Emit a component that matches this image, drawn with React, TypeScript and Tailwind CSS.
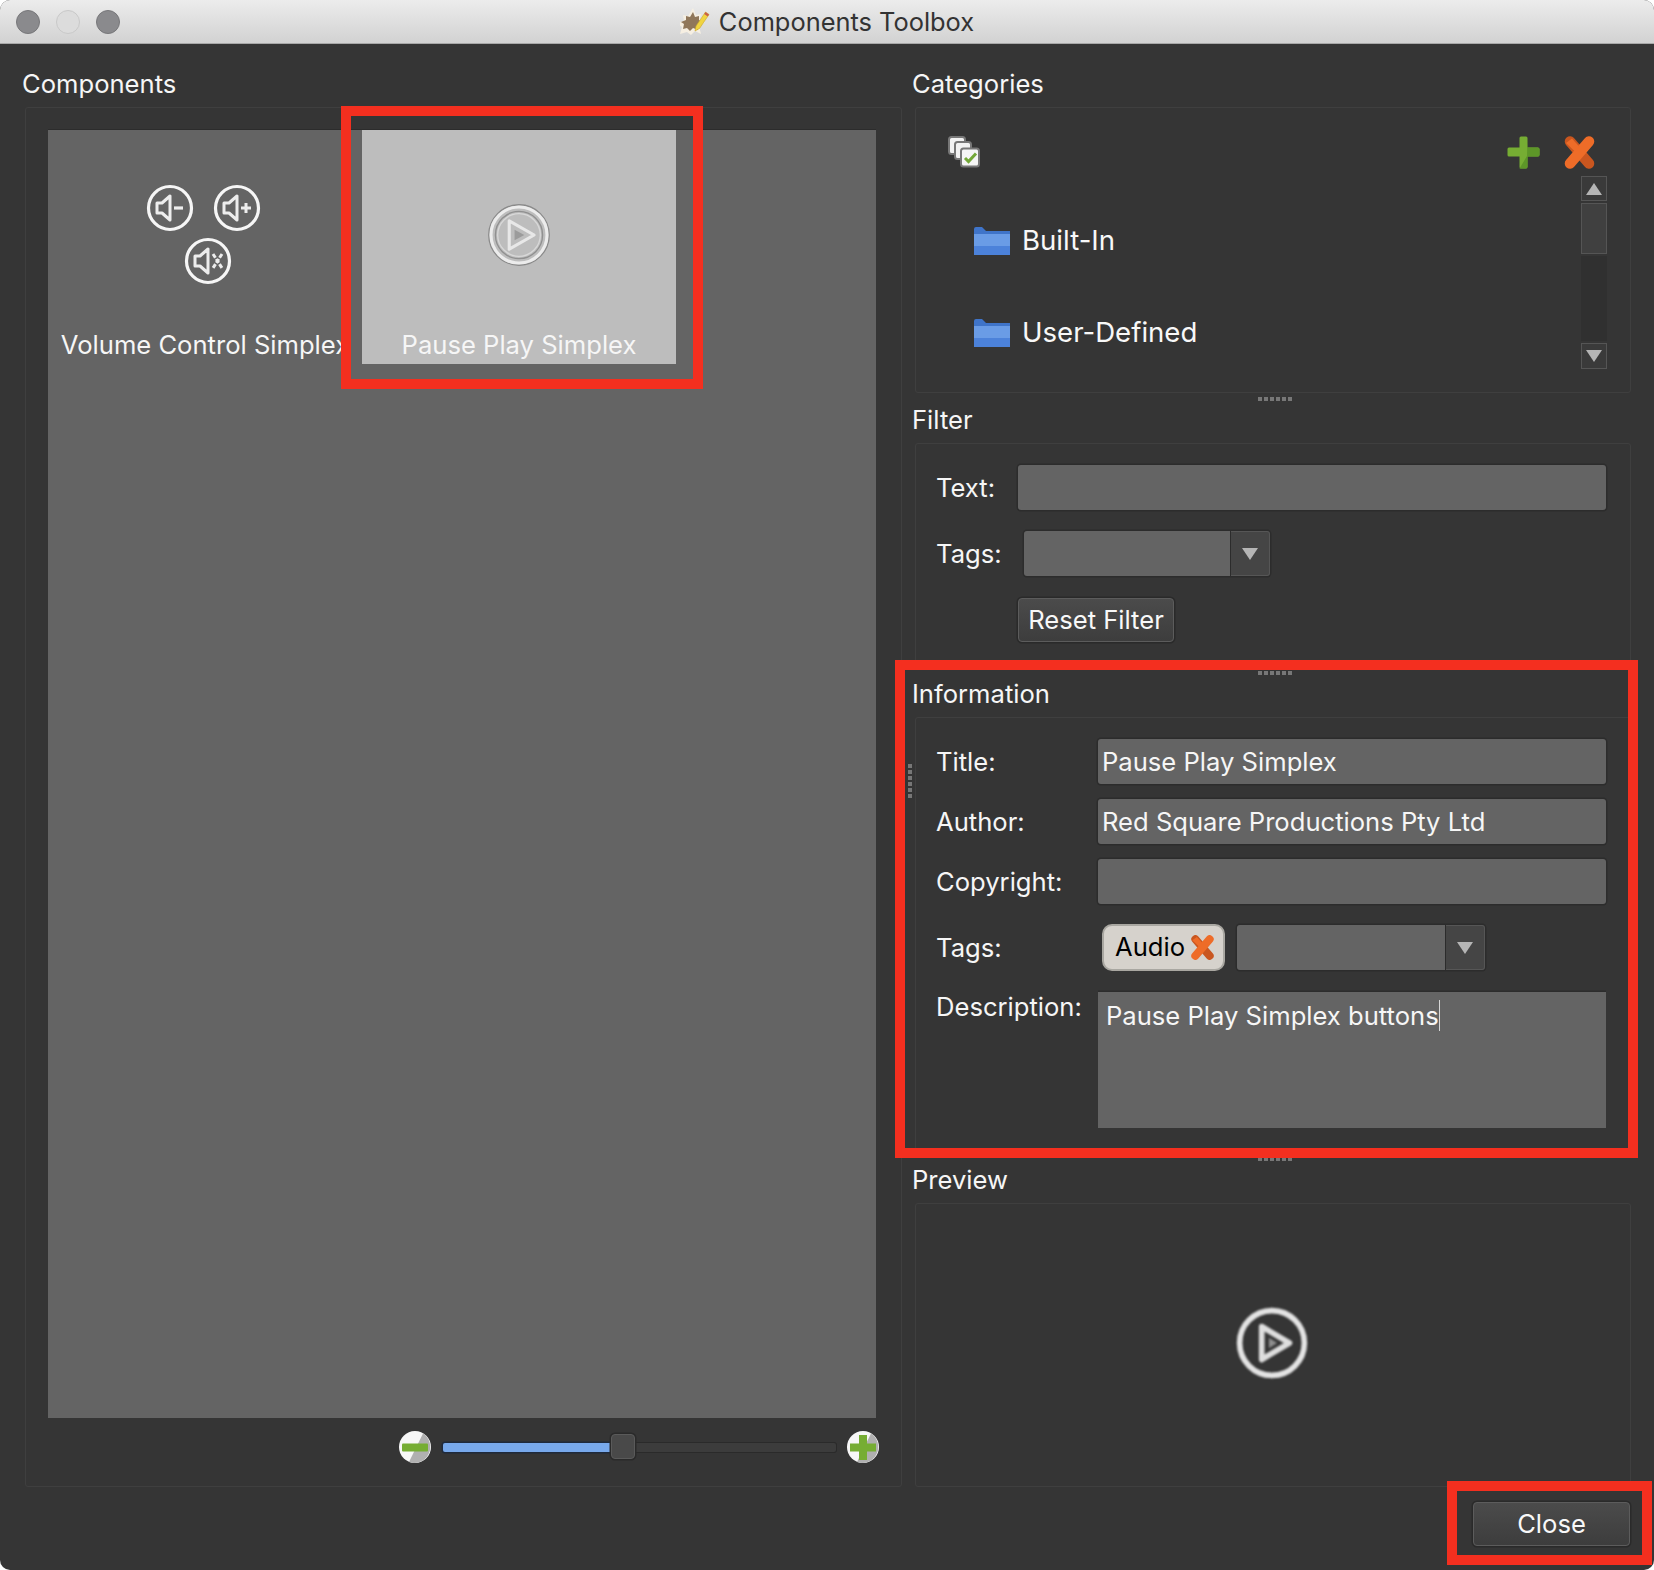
import React from "react";

const font = "font-['Inter','Liberation_Sans',sans-serif]";

function Plus({ className = "" }: { className?: string }) {
  return (
    <svg viewBox="0 0 33 33" className={className}>
      <path d="M12.5 2a1.5 1.5 0 0 1 1.5-1.5h5A1.5 1.5 0 0 1 20.5 2v9.5H31a1.5 1.5 0 0 1 1.5 1.5v6a1.5 1.5 0 0 1-1.5 1.5H20.5V31a1.5 1.5 0 0 1-1.5 1.5h-5a1.5 1.5 0 0 1-1.5-1.5V20.5H2A1.5 1.5 0 0 1 .5 19v-6A1.5 1.5 0 0 1 2 11.5h10.5z" fill="#76ad33" />
      <path d="M20.5 .8V11.5H31l1.5 1.5v6L31 20.5H20.5V31L19 32.5h-6.5L20 20z" fill="#5d9628" />
    </svg>
  );
}

function Cross({ className = "" }: { className?: string }) {
  return (
    <svg viewBox="0 0 33 33" className={className}>
      <path d="M7 5.500L26 27.500" stroke="#c9561f" strokeWidth="10.500" strokeLinecap="round" fill="none" />
      <path d="M26 5.500L7 27.500" stroke="#ee6c28" strokeWidth="10.500" strokeLinecap="round" fill="none" />
      <path d="M9 2.500L16.500 11 12.500 16 3 7z" fill="#ee6c28" />
    </svg>
  );
}

function Folder() {
  return (
    <svg viewBox="0 0 36 28" className="w-[36px] h-[28px] shrink-0">
      <path d="M0 2a2 2 0 0 1 2-2h6l4 4h24v8H0z" fill="#3f74c9" />
      <path d="M0 7h36v21H0z" fill="#6a9ce6" />
      <path d="M0 19h36v9H0z" fill="#4c82da" />
    </svg>
  );
}

function Arrow({ down = false }: { down?: boolean }) {
  return (
    <svg viewBox="0 0 16 12" className="w-[16px] h-[12px]">
      <path d={down ? "M0 0h16L8 12z" : "M0 12h16L8 0z"} fill="#b5b5b5" />
    </svg>
  );
}

function CircleIcon({ kind }: { kind: "minus" | "plus" | "mute" }) {
  return (
    <svg viewBox="0 0 48 48" className="w-[48px] h-[48px] blur-[0.5px]">
      <circle cx="24" cy="24" r="21.500" fill="none" stroke="#f6f6f6" strokeWidth="3.200" />
      <path d="M11 19h5l8-7v24l-8-7h-5z" fill="none" stroke="#ededed" strokeWidth="3" strokeLinejoin="round" />
      {kind === "minus" && <path d="M28 24h9" stroke="#ededed" strokeWidth="3.200" />}
      {kind === "plus" && <path d="M28 24h10M33 19v10" stroke="#ededed" strokeWidth="3" />}
      {kind === "mute" && <path d="M29 17l9 14M38 17l-9 14" stroke="#ededed" strokeWidth="3" strokeDasharray="4.500 1.500" />}
    </svg>
  );
}

function PlayIcon({ size, faded = false }: { size: string; faded?: boolean }) {
  return (
    <svg viewBox="0 0 72 72" className={`${size} ${faded ? "blur-[0.6px]" : "blur-[1px]"}`}>
      {faded ? (
        <>
          <circle cx="36" cy="36" r="34" fill="none" stroke="#8a8a8a" strokeWidth="1.500" />
          <circle cx="36" cy="36" r="31.500" fill="none" stroke="#ececec" strokeWidth="3.500" />
          <circle cx="36" cy="36" r="26.500" fill="none" stroke="#909090" strokeWidth="1.500" />
          <circle cx="36" cy="36" r="24" fill="none" stroke="#d8d8d8" strokeWidth="1.500" />
          <path d="M25 20l28 16-28 16z" fill="none" stroke="#e8e8e8" strokeWidth="3.500" strokeLinejoin="round" />
          <path d="M31 30l11 6-11 6z" fill="#9b9b9b" />
        </>
      ) : (
        <>
          <circle cx="36" cy="36" r="31.500" fill="none" stroke="#e4e4e4" strokeWidth="5.500" />
          <path d="M26 20l27 16-27 16z" fill="none" stroke="#dedede" strokeWidth="5.500" strokeLinejoin="round" />
          <path d="M33 31l8 5-8 5z" fill="#8f8f8f" />
        </>
      )}
    </svg>
  );
}

function StackChecks() {
  return (
    <svg viewBox="0 0 32 32" className="w-[32px] h-[32px] blur-[0.3px]">
      <rect x="1" y="1" width="16" height="17" rx="2.500" fill="#f2f2f2" stroke="#777" strokeWidth="2" />
      <rect x="7" y="6" width="16" height="17" rx="2.500" fill="#f2f2f2" stroke="#777" strokeWidth="2" />
      <rect x="13" y="12.500" width="18" height="18" rx="2.500" fill="#f5f5f5" stroke="#777" strokeWidth="2" />
      <path d="M17 22l3.500 3.500L28 17.500" fill="none" stroke="#73a838" strokeWidth="3" />
    </svg>
  );
}

function TitleIcon() {
  return (
    <svg viewBox="0 0 30 27" className="w-[30px] h-[27px] shrink-0 blur-[0.3px]">
      <path d="M13 0l3 7 5-1-1 5 5 3-6 4 2 8-6-3-4 4-4-3-7 2 2-7-5-4 7-2-1-6 5 1z" fill="#f6efe2" />
      <path d="M13 4l2 5 4-1v4l3 2-5 3 1 5-5-2-3 3-3-3-4 1 1-5-3-2 5-2V8l4 1z" fill="#90775a" />
      <path d="M25.500 4l3.500 2.500-9.500 14-4.500 2.500 1-5z" fill="#f0d441" stroke="#c8a52c" strokeWidth=".6" />
      <path d="M25.500 4l3.500 2.500-1.300 2-3.500-2.500z" fill="#c9604a" />
    </svg>
  );
}

function Grip({ vertical = false }: { vertical?: boolean }) {
  const dots = Array.from({ length: 6 });
  return (
    <div className={vertical ? "flex flex-col gap-[2px]" : "flex gap-[2px]"}>
      {dots.map((_, i) => (
        <span key={i} className="w-[4px] h-[4px] bg-[#777777]" />
      ))}
    </div>
  );
}

function Splitter() {
  return (
    <div className="h-[12px] flex items-center justify-center pl-[7px] pb-[1px]">
      <Grip />
    </div>
  );
}

function Heading({ children }: { children: React.ReactNode }) {
  return <div className="h-[30px] leading-[30px] mb-[8px] text-[25.6px] text-[#f6f6f6]">{children}</div>;
}

function Panel({ className = "", children }: { className?: string; children?: React.ReactNode }) {
  return <div className={`ml-[3px] border border-[#3f3f3f] rounded-[3px] ${className}`}>{children}</div>;
}

function Field({ children, className = "" }: { children?: React.ReactNode; className?: string }) {
  return (
    <div className={`h-[45px] bg-[#646464] rounded-[3px] shadow-[0_0_0_1.5px_#2c2c2c] pl-[4px] flex items-center text-[25.6px] leading-none text-[#f6f6f6] whitespace-nowrap ${className}`}>
      {children}
    </div>
  );
}

function Combo({ className = "" }: { className?: string }) {
  return (
    <div className={`h-[45px] flex rounded-[3px] shadow-[0_0_0_1.5px_#2c2c2c] ${className}`}>
      <div className="flex-1 bg-[#646464] rounded-l-[3px] border-r border-[#2c2c2c]" />
      <div className="w-[39px] bg-[#454545] rounded-r-[3px] border border-l-0 border-[#565656] flex items-center justify-center">
        <Arrow down />
      </div>
    </div>
  );
}

function Label({ children, width }: { children: React.ReactNode; width: string }) {
  return <div className={`${width} shrink-0 text-[25.6px] leading-[30px] text-[#f6f6f6]`}>{children}</div>;
}

function ActionButton({ children, className = "" }: { children: React.ReactNode; className?: string }) {
  return (
    <div className={`h-[44px] flex items-center justify-center rounded-[4px] border border-[#5c5c5c] bg-gradient-to-b from-[#4b4b4b] to-[#3d3d3d] shadow-[0_0_0_1.500px_#2a2a2a] text-[25.6px] text-[#f8f8f8] ${className}`}>
      {children}
    </div>
  );
}

function Tile({ selected = false, label, children }: { selected?: boolean; label: string; children: React.ReactNode }) {
  return (
    <div className={`relative w-[314px] h-[234px] shrink-0 overflow-hidden flex flex-col items-center ${selected ? "bg-[#bdbdbd]" : ""}`}>
      <div className="h-[200px] flex items-center justify-center">{children}</div>
      <div className="h-[30px] leading-[30px] text-[25.6px] text-[#f6f6f6] whitespace-nowrap">{label}</div>
    </div>
  );
}

function Slider() {
  return (
    <div className="h-[60px] flex items-center justify-end pb-[2px]">
      <svg viewBox="0 0 32 32" className="w-[32px] h-[32px] shrink-0">
        <circle cx="16" cy="16" r="16" fill="#f7f7f7" />
        <path d="M24 2.500A16 16 0 0 1 10 31z" fill="#b0b0b0" />
        <rect x="3" y="12.500" width="26" height="8" rx="1" fill="#76ad33" />
      </svg>
      <div className="relative ml-[12px] w-[393px] h-[9px] rounded-[2px] bg-[#3c3c3c] shadow-[0_0_0_1px_#2a2a2a]">
        <div className="h-full w-[168px] rounded-l-[2px] bg-[#78a9ec] shadow-[0_0_0_1.500px_#1f2a3c]" />
        <div className="absolute left-[168px] top-[-9px] w-[24px] h-[25px] rounded-[4px] bg-[#494949] border border-[#5a5a5a] shadow-[0_0_0_1.500px_#2a2a2a]" />
      </div>
      <svg viewBox="0 0 32 32" className="ml-[11px] w-[32px] h-[32px] shrink-0">
        <circle cx="16" cy="16" r="16" fill="#f7f7f7" />
        <path d="M24 2.500A16 16 0 0 1 10 31z" fill="#b0b0b0" />
        <path d="M12 4h8v8.500h9v8h-9V29h-8v-8.500H3v-8h9z" fill="#76ad33" />
      </svg>
    </div>
  );
}

export default function App() {
  return (
    <div className={`relative w-[1654px] h-[1570px] bg-white overflow-hidden ${font}`}>
      <div className="h-full flex flex-col bg-[#353535] rounded-[10px] overflow-hidden">
        {/* title bar */}
        <div className="relative h-[44px] shrink-0 flex items-center justify-center gap-[9px] bg-gradient-to-b from-[#ececec] to-[#d2d2d2] border-b border-[#a8a8a8]">
          <div className="absolute left-[16px] top-[10px] flex gap-[16px]">
            <span className="w-[24px] h-[24px] rounded-full bg-[#8a8a8d] border border-[#77777a]" />
            <span className="w-[24px] h-[24px] rounded-full bg-[#dcdcdc] border border-[#c8c8c8]" />
            <span className="w-[24px] h-[24px] rounded-full bg-[#8a8a8d] border border-[#77777a]" />
          </div>
          <TitleIcon />
          <span className="text-[25.4px] leading-none text-[#333333]">Components Toolbox</span>
        </div>

        {/* body */}
        <div className="flex gap-[10px] pl-[22px] pt-[25px]">
          {/* left */}
          <div className="w-[880px] shrink-0">
            <Heading>Components</Heading>
            <Panel className="h-[1380px] flex flex-col px-[22px] pt-[22px] pb-[8px]">
              <div className="flex-1 mr-[3px] bg-[#646464] shadow-[0_-1px_0_#2c2c2c] flex items-start">
                <Tile label="Volume Control Simplex">
                  <div className="w-[120px] mr-[4px] flex flex-wrap justify-center gap-x-[19px] gap-y-[5px] pt-[8px]">
                    <CircleIcon kind="minus" />
                    <CircleIcon kind="plus" />
                    <div className="ml-[10px]">
                      <CircleIcon kind="mute" />
                    </div>
                  </div>
                </Tile>
                <Tile selected label="Pause Play Simplex">
                  <PlayIcon size="w-[64px] h-[64px] mb-[-10px]" faded />
                </Tile>
              </div>
              <Slider />
            </Panel>
          </div>

          {/* right */}
          <div className="relative w-[719px] shrink-0">
            <div className="absolute left-[-4px] top-[695px]">
              <Grip vertical />
            </div>

            <Heading>Categories</Heading>
            <Panel className="h-[286px] pt-[28px]">
              <div className="flex items-center justify-between h-[32px] pl-[32px] pr-[34px]">
                <StackChecks />
                <div className="flex gap-[23px]">
                  <Plus className="w-[33px] h-[33px]" />
                  <Cross className="w-[33px] h-[33px]" />
                </div>
              </div>
              <div className="flex h-[193px] mt-[8px] pl-[58px] pr-[23px]">
                <div className="flex-1 flex flex-col gap-[52px] pt-[45px]">
                  {["Built-In", "User-Defined"].map((t) => (
                    <div key={t} className="h-[40px] flex items-center gap-[12px] text-[27.6px] text-[#f8f8f8]">
                      <Folder />
                      <span>{t}</span>
                    </div>
                  ))}
                </div>
                <div className="w-[26px] flex flex-col">
                  <div className="h-[25px] border border-[#555555] bg-[#3a3a3a] flex items-center justify-center">
                    <Arrow />
                  </div>
                  <div className="h-[51px] mt-[2px] border border-[#555555] bg-[#404040]" />
                  <div className="flex-1 my-[2px] bg-[#303030]" />
                  <div className="h-[26px] border border-[#555555] bg-[#3a3a3a] flex items-center justify-center">
                    <Arrow down />
                  </div>
                </div>
              </div>
            </Panel>

            <Splitter />

            <Heading>Filter</Heading>
            <Panel className="h-[224px] pl-[20px] pr-[24px] pt-[21px]">
              <div className="flex items-center">
                <Label width="w-[82px]">Text:</Label>
                <Field className="flex-1" />
              </div>
              <div className="flex items-center mt-[21px]">
                <Label width="w-[88px]">Tags:</Label>
                <Combo className="w-[246px]" />
              </div>
              <ActionButton className="ml-[82px] mt-[22px] w-[156px]">Reset Filter</ActionButton>
            </Panel>

            <Splitter />

            <Heading>Information</Heading>
            <Panel className="h-[436px] pl-[20px] pr-[24px] pt-[21px]">
              <div className="flex items-center">
                <Label width="w-[162px]">Title:</Label>
                <Field className="flex-1">Pause Play Simplex</Field>
              </div>
              <div className="flex items-center mt-[15px]">
                <Label width="w-[162px]">Author:</Label>
                <Field className="flex-1">Red Square Productions Pty Ltd</Field>
              </div>
              <div className="flex items-center mt-[15px]">
                <Label width="w-[162px]">Copyright:</Label>
                <Field className="flex-1" />
              </div>
              <div className="flex items-center mt-[20px]">
                <Label width="w-[166px]">Tags:</Label>
                <div className="w-[123px] h-[47px] shrink-0 rounded-[10px] bg-[#d6d2cc] border-2 border-[#a9a7a1] flex items-center gap-[5px] pl-[11px] text-[25.6px] text-black">
                  Audio
                  <Cross className="w-[25px] h-[25px]" />
                </div>
                <Combo className="ml-[12px] w-[248px]" />
              </div>
              <div className="flex items-start mt-[21px]">
                <Label width="w-[162px]">Description:</Label>
                <div className="flex-1 h-[136px] bg-[#646464] shadow-[0_-1.500px_0_#2c2c2c] pl-[8px] pt-[9px] text-[25.6px] leading-[30px] text-[#f6f6f6]">
                  <span className="border-r border-[#d8d8d8]">Pause Play Simplex buttons</span>
                </div>
              </div>
            </Panel>

            <Splitter />

            <Heading>Preview</Heading>
            <Panel className="h-[284px] flex items-center justify-center">
              <PlayIcon size="w-[74px] h-[74px] mb-[4px] mr-[3px]" />
            </Panel>

            <div className="flex justify-end pt-[15px] pr-[1px]">
              <ActionButton className="w-[157px]">Close</ActionButton>
            </div>
          </div>
        </div>
      </div>

      {/* annotation frames drawn over the screenshot */}
      <div className="absolute left-[341px] top-[106px] w-[362px] h-[283px] border-[10px] border-[#f42f1f]" />
      <div className="absolute left-[895px] top-[660px] w-[743px] h-[498px] border-[10px] border-[#f42f1f]" />
      <div className="absolute left-[1447px] top-[1481px] w-[205px] h-[84px] border-[10px] border-[#f42f1f]" />
    </div>
  );
}
